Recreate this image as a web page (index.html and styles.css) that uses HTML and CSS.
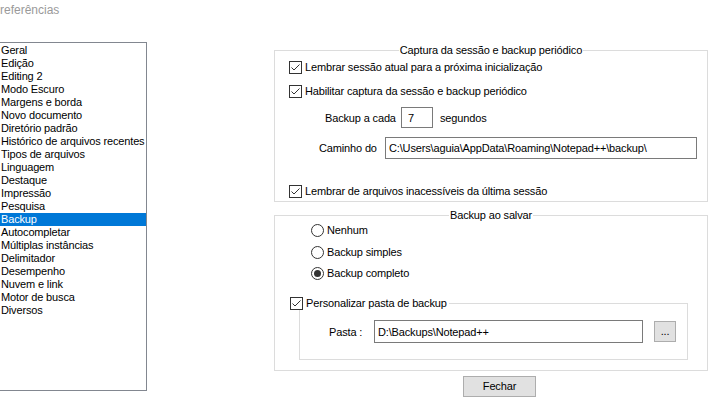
FILE: index.html
```html
<!DOCTYPE html>
<html lang="pt">
<head>
<meta charset="utf-8">
<title>Preferências</title>
<link rel="stylesheet" href="styles.css">
</head>
<body>
<div class="title">referências</div>
<div class="content">
  <ul class="list">
    <li>Geral</li>
    <li>Edição</li>
    <li>Editing 2</li>
    <li>Modo Escuro</li>
    <li>Margens e borda</li>
    <li>Novo documento</li>
    <li>Diretório padrão</li>
    <li>Histórico de arquivos recentes</li>
    <li>Tipos de arquivos</li>
    <li>Linguagem</li>
    <li>Destaque</li>
    <li>Impressão</li>
    <li>Pesquisa</li>
    <li class="sel">Backup</li>
    <li>Autocompletar</li>
    <li>Múltiplas instâncias</li>
    <li>Delimitador</li>
    <li>Desempenho</li>
    <li>Nuvem e link</li>
    <li>Motor de busca</li>
    <li>Diversos</li>
  </ul>
  <div class="panel">
    <fieldset class="group g1">
      <legend class="gtitle">Captura da sessão e backup periódico</legend>
      <div class="check r1"><span class="box"><svg viewBox="0 0 11 11" width="11" height="11"><polyline points="1.5,5.5 4,8 9.5,2.5" /></svg></span><span class="clabel">Lembrar sessão atual para a próxima inicialização</span></div>
      <div class="check r2"><span class="box"><svg viewBox="0 0 11 11" width="11" height="11"><polyline points="1.5,5.5 4,8 9.5,2.5" /></svg></span><span class="clabel">Habilitar captura da sessão e backup periódico</span></div>
      <div class="field r3"><span class="lbl l-cada">Backup a cada</span><input class="edit e-secs" type="text" value="7"><span class="unit">segundos</span></div>
      <div class="field r4"><span class="lbl l-path">Caminho do</span><input class="edit e-path" type="text" value="C:\Users\aguia\AppData\Roaming\Notepad++\backup\"></div>
      <div class="check r5"><span class="box"><svg viewBox="0 0 11 11" width="11" height="11"><polyline points="1.5,5.5 4,8 9.5,2.5" /></svg></span><span class="clabel">Lembrar de arquivos inacessíveis da última sessão</span></div>
    </fieldset>
    <fieldset class="group g2">
      <legend class="gtitle">Backup ao salvar</legend>
      <div class="radio rd1"><span class="circle"></span><span class="rlabel">Nenhum</span></div>
      <div class="radio rd2"><span class="circle"></span><span class="rlabel">Backup simples</span></div>
      <div class="radio rd3"><span class="circle on"></span><span class="rlabel">Backup completo</span></div>
      <fieldset class="group inner">
        <legend class="check clegend"><span class="box"><svg viewBox="0 0 11 11" width="11" height="11"><polyline points="1.5,5.5 4,8 9.5,2.5" /></svg></span><span class="clabel">Personalizar pasta de backup</span></legend>
        <div class="field r-pasta"><span class="lbl l-pasta">Pasta :</span><input class="edit e-pasta" type="text" value="D:\Backups\Notepad++"><button class="btn dots" type="button">...</button></div>
      </fieldset>
    </fieldset>
    <button class="btn close" type="button">Fechar</button>
  </div>
</div>
</body>
</html>
```
FILE: styles.css
```css
html, body {
  margin: 0;
  padding: 0;
  background: #ffffff;
}

body {
  font-family: "Liberation Sans", Arial, sans-serif;
  font-size: 11px;
  letter-spacing: -0.15px;
  color: #000000;
  overflow: hidden;
}

.title {
  height: 42px;
  box-sizing: border-box;
  padding-top: 3px;
  font-size: 12px;
  line-height: 15px;
  letter-spacing: 0;
  color: #9a9a9a;
}

.content {
  display: flex;
  align-items: flex-start;
}

.list {
  list-style: none;
  margin: 0 0 0 -1px;
  padding: 1px 0 0 0;
  width: 148px;
  height: 349px;
  box-sizing: border-box;
  border: 1px solid #828790;
  flex: none;
}

.list li {
  height: 13px;
  line-height: 13px;
  padding-left: 1px;
  white-space: nowrap;
  overflow: hidden;
}

.list li.sel {
  background: #0078d7;
  color: #ffffff;
}

.panel {
  margin-left: 127px;
  margin-top: 2px;
  width: 434px;
  flex: none;
}

.group {
  margin: 0;
  padding: 0;
  border: 1px solid #dcdcdc;
  min-width: 0;
  min-inline-size: 0;
}

.gtitle {
  margin: 0 auto;
  padding: 0 1px;
  height: 13px;
  line-height: 13px;
  white-space: nowrap;
}

.check {
  display: flex;
  align-items: center;
  height: 13px;
  line-height: 13px;
  margin-left: 14px;
  white-space: nowrap;
}

.box {
  width: 13px;
  height: 13px;
  box-sizing: border-box;
  border: 1px solid #333333;
  background: #ffffff;
  display: flex;
  align-items: center;
  justify-content: center;
  flex: none;
}

.box svg {
  display: block;
}

.box polyline {
  fill: none;
  stroke: #333333;
  stroke-width: 1;
}

.clabel {
  margin-left: 3px;
}

.r1 { margin-top: 4px; }
.r2 { margin-top: 11px; }
.r3 { margin-top: 9px; height: 21px; }
.r4 { margin-top: 9px; height: 22px; }
.r5 { margin-top: 26px; }

.g1 {
  padding-bottom: 3px;
}

.field {
  display: flex;
  align-items: center;
  white-space: nowrap;
}

.lbl {
  flex: none;
}

.l-cada {
  margin-left: 50px;
  width: 76px;
}

.l-path {
  margin-left: 44px;
  width: 66px;
}

.edit {
  box-sizing: border-box;
  border: 1px solid #7a7a7a;
  margin: 0;
  padding: 0 0 0 3px;
  font: inherit;
  letter-spacing: inherit;
  color: #000000;
  background: #ffffff;
  outline: none;
  flex: none;
}

.e-secs {
  width: 32px;
  height: 21px;
  padding-left: 6px;
}

.unit {
  margin-left: 7px;
}

.e-path {
  width: 312px;
  height: 22px;
}

.g2 {
  margin-top: 7px;
  padding-bottom: 10px;
}

.radio {
  display: flex;
  align-items: center;
  height: 13px;
  line-height: 13px;
  margin-left: 36px;
  white-space: nowrap;
}

.rd1 { margin-top: 2px; }
.rd2 { margin-top: 9px; }
.rd3 { margin-top: 8px; }

.circle {
  width: 13px;
  height: 13px;
  box-sizing: border-box;
  border: 1px solid #333333;
  border-radius: 50%;
  background: #ffffff;
  display: flex;
  align-items: center;
  justify-content: center;
  flex: none;
}

.circle.on::after {
  content: "";
  width: 7px;
  height: 7px;
  border-radius: 50%;
  background: #333333;
}

.rlabel {
  margin-left: 3px;
}

.inner {
  margin: 17px 0 0 24px;
  width: 389px;
  box-sizing: border-box;
  padding-bottom: 16px;
}

.clegend {
  margin-left: -10px;
  padding: 0 2px 0 0;
  display: flex;
}

.r-pasta {
  margin-top: 10px;
  height: 23px;
}

.l-pasta {
  margin-left: 29px;
  width: 45px;
}

.e-pasta {
  width: 269px;
  height: 23px;
}

.btn {
  box-sizing: border-box;
  border: 1px solid #adadad;
  background: #e1e1e1;
  font: inherit;
  letter-spacing: inherit;
  color: #000000;
  padding: 0;
  margin: 0;
  line-height: 19px;
  text-align: center;
  border-radius: 0;
}

.dots {
  margin-left: 11px;
  width: 22px;
  height: 21px;
  flex: none;
}

.close {
  display: block;
  margin: 5px 0 0 189px;
  width: 73px;
  height: 21px;
}
```
